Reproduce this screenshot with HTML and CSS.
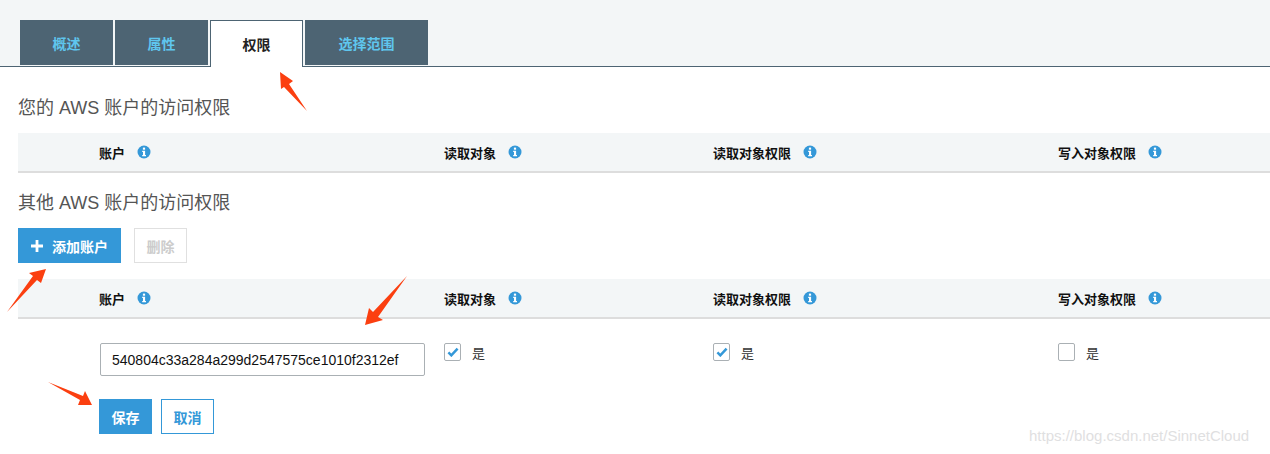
FILE: index.html
```html
<!DOCTYPE html>
<html lang="zh">
<head>
<meta charset="utf-8">
<title>权限</title>
<link rel="stylesheet" href="styles.css">
</head>
<body>
<div class="tabs-bar">
  <a class="tab">概述</a>
  <a class="tab">属性</a>
  <a class="tab tab-active">权限</a>
  <a class="tab tab-wide">选择范围</a>
</div>
<main class="content">
  <h2 class="section-title section-first">您的 AWS 账户的访问权限</h2>
  <div class="grid-row table-head">
    <div class="head-cell">账户<svg class="info" viewBox="0 0 14 14"><circle cx="7" cy="7" r="6.5"/><rect class="info-i" x="5.9" y="2.6" width="2.2" height="2.1"/><path class="info-i" d="M5.2 5.8H8.1V10H9V11.2H5.2V10H6V7H5.2Z"/></svg></div>
    <div class="head-cell">读取对象<svg class="info" viewBox="0 0 14 14"><circle cx="7" cy="7" r="6.5"/><rect class="info-i" x="5.9" y="2.6" width="2.2" height="2.1"/><path class="info-i" d="M5.2 5.8H8.1V10H9V11.2H5.2V10H6V7H5.2Z"/></svg></div>
    <div class="head-cell">读取对象权限<svg class="info" viewBox="0 0 14 14"><circle cx="7" cy="7" r="6.5"/><rect class="info-i" x="5.9" y="2.6" width="2.2" height="2.1"/><path class="info-i" d="M5.2 5.8H8.1V10H9V11.2H5.2V10H6V7H5.2Z"/></svg></div>
    <div class="head-cell">写入对象权限<svg class="info" viewBox="0 0 14 14"><circle cx="7" cy="7" r="6.5"/><rect class="info-i" x="5.9" y="2.6" width="2.2" height="2.1"/><path class="info-i" d="M5.2 5.8H8.1V10H9V11.2H5.2V10H6V7H5.2Z"/></svg></div>
  </div>
  <h2 class="section-title section-second">其他 AWS 账户的访问权限</h2>
  <div class="toolbar">
    <button class="btn btn-primary btn-add"><svg class="plus" viewBox="0 0 12 12"><path d="M4.6 0H7.4V4.6H12V7.4H7.4V12H4.6V7.4H0V4.6H4.6Z"/></svg>添加账户</button>
    <button class="btn btn-disabled">删除</button>
  </div>
  <div class="grid-row table-head">
    <div class="head-cell">账户<svg class="info" viewBox="0 0 14 14"><circle cx="7" cy="7" r="6.5"/><rect class="info-i" x="5.9" y="2.6" width="2.2" height="2.1"/><path class="info-i" d="M5.2 5.8H8.1V10H9V11.2H5.2V10H6V7H5.2Z"/></svg></div>
    <div class="head-cell">读取对象<svg class="info" viewBox="0 0 14 14"><circle cx="7" cy="7" r="6.5"/><rect class="info-i" x="5.9" y="2.6" width="2.2" height="2.1"/><path class="info-i" d="M5.2 5.8H8.1V10H9V11.2H5.2V10H6V7H5.2Z"/></svg></div>
    <div class="head-cell">读取对象权限<svg class="info" viewBox="0 0 14 14"><circle cx="7" cy="7" r="6.5"/><rect class="info-i" x="5.9" y="2.6" width="2.2" height="2.1"/><path class="info-i" d="M5.2 5.8H8.1V10H9V11.2H5.2V10H6V7H5.2Z"/></svg></div>
    <div class="head-cell">写入对象权限<svg class="info" viewBox="0 0 14 14"><circle cx="7" cy="7" r="6.5"/><rect class="info-i" x="5.9" y="2.6" width="2.2" height="2.1"/><path class="info-i" d="M5.2 5.8H8.1V10H9V11.2H5.2V10H6V7H5.2Z"/></svg></div>
  </div>
  <div class="grid-row table-body">
    <div class="account-text"><input class="account-input" type="text" value="540804c33a284a299d2547575ce1010f2312ef"></div>
    <label class="check"><span class="box"><svg viewBox="0 0 14 12"><path d="M1.5 6.5L5 10L12.5 2"/></svg></span>是</label>
    <label class="check"><span class="box"><svg viewBox="0 0 14 12"><path d="M1.5 6.5L5 10L12.5 2"/></svg></span>是</label>
    <label class="check"><span class="box"></span>是</label>
  </div>
  <div class="actions">
    <button class="btn btn-primary btn-save">保存</button>
    <button class="btn btn-outline">取消</button>
  </div>
</main>
<svg class="arrows" viewBox="0 0 1270 454" aria-hidden="true">
  <path d="M280 72L293 81L289 84L307 111L284 87L281 89Z"/>
  <path d="M46 269L41 283L37 280L7 312L33 276L29 273Z"/>
  <path d="M365 325L369 308L373 312L407 276L378 317L383 320Z"/>
  <path d="M92 405L78 405L80 400L48 382L83 396L85 391Z"/>
</svg>
<span class="watermark">https://blog.csdn.net/SinnetCloud</span>
</body>
</html>
```
FILE: styles.css
```css
* { box-sizing: border-box; }
html, body { margin: 0; padding: 0; }
body {
  width: 1270px;
  height: 454px;
  overflow: hidden;
  position: relative;
  background: #fff;
  font-family: "Liberation Sans", "Noto Sans CJK SC", sans-serif;
  color: #222;
}
.tabs-bar {
  display: flex;
  gap: 2px;
  height: 67px;
  padding: 20px 0 0 20px;
  background: #f3f6f7;
  border-bottom: 1px solid #4d6473;
}
.tab {
  width: 93px;
  height: 45px;
  display: flex;
  align-items: center;
  justify-content: center;
  background: #4d6473;
  color: #5fc6ee;
  font-size: 14px;
  font-weight: 700;
}
.tab-wide { width: 123px; }
.tab-active {
  height: 47px;
  background: #fff;
  color: #222;
  border: 1px solid #4d6473;
  border-bottom: 0;
}
.content { padding-left: 18px; }
.section-title {
  margin: 0;
  font-size: 18px;
  font-weight: 400;
  line-height: 24px;
  color: #555;
}
.section-first { padding-top: 29px; height: 66px; }
.section-second { padding-top: 18px; height: 55px; }
.grid-row {
  display: grid;
  grid-template-columns: 345px 269px 345px 1fr;
  padding-left: 81px;
}
.table-head {
  height: 40px;
  background: #f3f6f7;
  border-bottom: 2px solid #ddd;
  align-items: center;
}
.head-cell {
  display: flex;
  align-items: center;
  font-size: 13px;
  font-weight: 700;
  color: #111;
}
.info { width: 14px; height: 14px; margin-left: 12px; }
.info circle { fill: #3498d8; }
.info-i { fill: #fff; }
.toolbar {
  display: flex;
  gap: 13px;
  height: 51px;
}
.btn {
  height: 35px;
  padding: 0;
  border: 0;
  display: flex;
  align-items: center;
  justify-content: center;
  font-family: inherit;
  font-size: 14px;
  font-weight: 700;
}
.btn-primary { background: #3498d8; color: #fff; }
.btn-add { width: 103px; }
.plus { width: 12px; height: 12px; margin-right: 9px; fill: #fff; }
.btn-disabled {
  width: 53px;
  background: #fff;
  border: 1px solid #e0e0e0;
  color: #ccc;
}
.table-body {
  height: 80px;
  padding-top: 24px;
  align-items: start;
}
.account-input {
  display: block;
  width: 325px;
  height: 33px;
  margin-left: 1px;
  padding: 0 11px;
  border: 1px solid #aab0b4;
  border-radius: 2px;
  font-family: "Liberation Sans", sans-serif;
  font-size: 14px;
  color: #111;
  background: #fff;
}
.check {
  display: flex;
  align-items: center;
  height: 18px;
  font-size: 13px;
  color: #333;
}
.box {
  width: 17px;
  height: 18px;
  margin-right: 11px;
  border: 1px solid #aab0b4;
  border-radius: 2px;
  background: #fff;
  display: flex;
  align-items: center;
  justify-content: center;
}
.box svg { width: 12px; height: 10px; fill: none; stroke: #3498d8; stroke-width: 3; }
.actions {
  display: flex;
  gap: 9px;
  padding-left: 81px;
}
.btn-save { width: 53px; }
.btn-outline {
  width: 53px;
  background: #fff;
  border: 1px solid #3498d8;
  color: #3498d8;
}
.arrows {
  position: absolute;
  left: 0;
  top: 0;
  width: 1270px;
  height: 454px;
  fill: #fb3f10;
  pointer-events: none;
}
.watermark {
  position: absolute;
  left: 1029px;
  top: 427px;
  font-size: 15px;
  line-height: 18px;
  color: #dfe0e1;
  font-family: "Liberation Sans", sans-serif;
}
```
